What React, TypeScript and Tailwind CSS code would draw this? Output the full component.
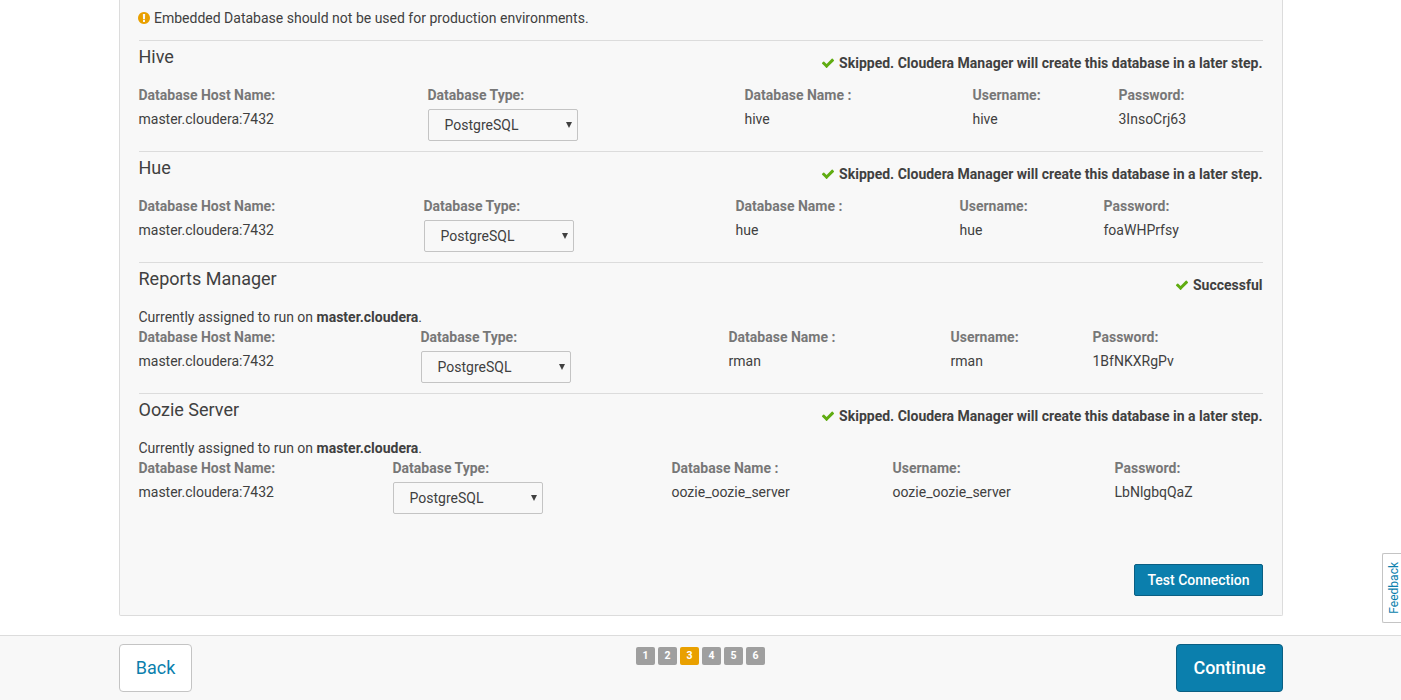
import React from 'react';

type Database = {
  title: string;
  status: string;
  host?: string;
  type: string;
  name: string;
  user: string;
  password: string;
  columns: string;
};

const SKIPPED = 'Skipped. Cloudera Manager will create this database in a later step.';

const databases: Database[] = [
  {
    title: 'Hive',
    status: SKIPPED,
    type: 'PostgreSQL',
    name: 'hive',
    user: 'hive',
    password: '3InsoCrj63',
    columns: 'grid-cols-[289px_317px_228px_146px_1fr]',
  },
  {
    title: 'Hue',
    status: SKIPPED,
    type: 'PostgreSQL',
    name: 'hue',
    user: 'hue',
    password: 'foaWHPrfsy',
    columns: 'grid-cols-[285px_312px_224px_144px_1fr]',
  },
  {
    title: 'Reports Manager',
    status: 'Successful',
    host: 'master.cloudera',
    type: 'PostgreSQL',
    name: 'rman',
    user: 'rman',
    password: '1BfNKXRgPv',
    columns: 'grid-cols-[282px_308px_222px_142px_1fr]',
  },
  {
    title: 'Oozie Server',
    status: SKIPPED,
    host: 'master.cloudera',
    type: 'PostgreSQL',
    name: 'oozie_oozie_server',
    user: 'oozie_oozie_server',
    password: 'LbNlgbqQaZ',
    columns: 'grid-cols-[254px_279px_221px_222px_1fr]',
  },
];

function CheckIcon() {
  return (
    <svg viewBox="0 0 1792 1792" className="mt-[3px] size-[14px] shrink-0 fill-[#60ac11]" aria-hidden="true">
      <path d="M1671 566q0 40-28 68l-724 724-136 136q-28 28-68 28t-68-28l-136-136-362-362q-28-28-28-68t28-68l136-136q28-28 68-28t68 28l294 295 656-657q28-28 68-28t68 28l136 136q28 28 28 68z" />
    </svg>
  );
}

function WarningIcon() {
  return (
    <svg viewBox="0 0 1792 1792" className="-ml-[1.5px] size-[14px] shrink-0 fill-[#e9a000]" aria-hidden="true">
      <path d="M896 128q209 0 385.5 103t279.5 279.5 103 385.5-103 385.5-279.5 279.5-385.5 103-385.5-103-279.5-279.5-103-385.5 103-385.5 279.5-279.5 385.5-103zm128 1247v-190q0-14-9-23.5t-22-9.5h-192q-13 0-23 10t-10 23v190q0 13 10 23t23 10h192q13 0 22-9.5t9-23.5zm-2-344l18-621q0-12-10-18-10-8-24-8h-220q-14 0-24 8-10 6-10 18l17 621q0 10 10 17.5t24 7.5h185q14 0 23.5-7.5t10.5-17.5z" />
    </svg>
  );
}

function Field({ label, children }: { label: string; children: React.ReactNode }) {
  return (
    <div className="whitespace-nowrap">
      <div className="mb-1 font-bold text-[#777]">{label}</div>
      {children}
    </div>
  );
}

function TypeSelect({ value }: { value: string }) {
  return (
    <button
      type="button"
      className="flex h-8 w-[150px] items-center justify-between rounded-[2px] border border-[#c4c4c4] bg-[#f8f8f8] pr-[5px] pl-4"
    >
      {value}
      <svg viewBox="0 0 6 6" className="h-[6px] w-[6px] fill-[#404040]" aria-hidden="true">
        <path d="M0 0h6L3 6z" />
      </svg>
    </button>
  );
}

function DatabaseSection({ db }: { db: Database }) {
  return (
    <section className="border-t border-[#dcdcdc] pb-[10px]">
      <div className="flex h-11 justify-between">
        <h3 className="pt-[5px] text-[18px] leading-[22px]">{db.title}</h3>
        <div className="flex gap-[4px] pt-3 font-bold">
          <CheckIcon />
          <span>{db.status}</span>
        </div>
      </div>
      {db.host && (
        <p>
          Currently assigned to run on <strong>{db.host}</strong>.
        </p>
      )}
      <div className={`grid ${db.columns}`}>
        <Field label="Database Host Name:">master.cloudera:7432</Field>
        <Field label="Database Type:">
          <TypeSelect value={db.type} />
        </Field>
        <Field label="Database Name :">{db.name}</Field>
        <Field label="Username:">{db.user}</Field>
        <Field label="Password:">{db.password}</Field>
      </div>
    </section>
  );
}

function Steps({ current }: { current: number }) {
  return (
    <ol className="flex gap-[3px] pt-[11px]">
      {[1, 2, 3, 4, 5, 6].map((n) => (
        <li
          key={n}
          className={`h-[18px] w-[19px] rounded-[2px] text-center text-[10.5px] leading-[18px] font-bold text-white ${
            n === current ? 'bg-[#e9a000]' : 'bg-[#9f9f9f]'
          }`}
        >
          {n}
        </li>
      ))}
    </ol>
  );
}

export default function App() {
  return (
    <div className="relative flex h-[700px] flex-col overflow-hidden bg-white font-['Roboto','Liberation_Sans',sans-serif] text-[14px] leading-5 text-[#404040]">
      <main className="mx-auto h-[616px] w-[1164px] rounded-b-[2px] border-x border-b border-[#dcdcdc] bg-[#f8f8f8] px-[19px]">
        <div className="flex h-10 items-start gap-[3px] pt-2">
          <div className="pt-[3px]">
            <WarningIcon />
          </div>
          <p>Embedded Database should not be used for production environments.</p>
        </div>
        {databases.map((db) => (
          <DatabaseSection key={db.title} db={db} />
        ))}
        <div className="mt-10 flex justify-end">
          <button
            type="button"
            className="h-8 w-[129px] rounded-[2px] border border-[#0a5f83] bg-[#0b7fad] pl-px font-medium text-white"
          >
            Test Connection
          </button>
        </div>
      </main>

      <footer className="mt-[19px] h-[65px] border-t border-[#dcdcdc] bg-[#f8f8f8]">
        <div className="mx-auto flex w-[1164px] items-start justify-between">
          <div className="flex w-[200px] pt-2">
            <button
              type="button"
              className="h-12 w-[73px] rounded-[4px] border border-[#c4c4c4] bg-white pl-px text-[18px] text-[#0b7fad]"
            >
              Back
            </button>
          </div>
          <Steps current={3} />
          <div className="flex w-[200px] justify-end pt-2">
            <button
              type="button"
              className="h-12 w-[107px] rounded-[4px] border border-[#0a5f83] bg-[#0b7fad] pl-px text-[18px] font-medium text-white"
            >
              Continue
            </button>
          </div>
        </div>
      </footer>

      <a className="absolute top-[553px] right-0 flex h-[70px] w-[19px] items-center justify-center rounded-l-[2px] border border-r-0 border-[#c4c4c4] bg-white pl-[3px] text-[12px] text-[#0b7fad]">
        <span className="rotate-180 [writing-mode:vertical-rl]">Feedback</span>
      </a>
    </div>
  );
}
